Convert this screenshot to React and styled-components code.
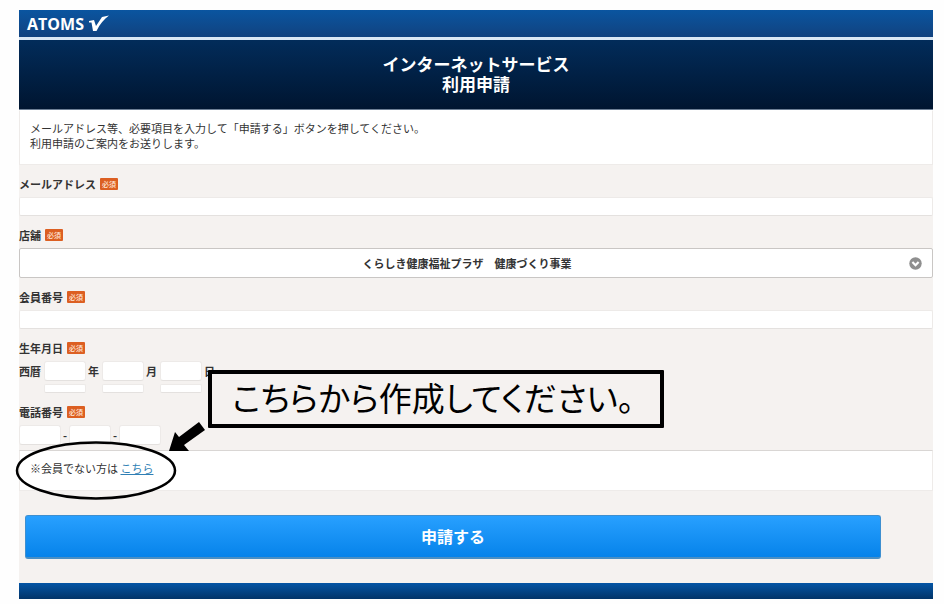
import React from 'react';
import styled, { createGlobalStyle, ThemeProvider } from 'styled-components';

const theme = {
  paper: '#f5f2f0',
  text: '#333333',
  required: '#dc5f22',
  link: '#2f7fb5',
  line: '#e4e1df',
  font: '"Noto Sans CJK JP", sans-serif'
};

const GlobalStyle = createGlobalStyle`
  * {
    box-sizing: border-box;
  }
  body {
    margin: 0;
    background: #fefefe;
  }
`;

const Page = styled.div`
  padding: 10px 11px 4px 19px;
  font-family: ${props => props.theme.font};
  font-size: 11px;
  line-height: 15px;
  color: ${props => props.theme.text};
`;

const Sheet = styled.main`
  position: relative;
  background: ${props => props.theme.paper};
`;

const BrandBar = styled.header`
  display: flex;
  align-items: center;
  gap: 5px;
  height: 30px;
  padding: 0 8px;
  background: linear-gradient(#0a55a0, #11427f);
  border-bottom: 3px solid #dbe8f5;
`;

const BrandName = styled.span`
  font-family: 'Open Sans', sans-serif;
  font-size: 16px;
  font-weight: 700;
  line-height: 20px;
  color: #ffffff;
`;

const TitleBar = styled.div`
  height: 70px;
  padding: 14px 0;
  background: linear-gradient(#022c5a, #001530);
  border-bottom: 1px solid #6d7f95;
`;

const Title = styled.h1`
  margin: 0;
  font-size: 17px;
  font-weight: 700;
  line-height: 20px;
  text-align: center;
  color: #ffffff;
`;

const Panel = styled.p`
  margin: 0;
  padding: 10px;
  background: #ffffff;
  border: 1px solid #eeebe9;
  border-top-color: ${props => (props.$ruled ? '#d9d6d4' : '#ffffff')};
`;

const Intro = styled(Panel)`
  height: 55px;
`;

const Notice = styled(Panel)`
  height: 41px;
  margin-top: 5px;
`;

const Link = styled.a`
  color: ${props => props.theme.link};
  text-decoration: underline;
`;

const Field = styled.div`
  padding-top: 9px;
`;

const Caption = styled.div`
  display: flex;
  align-items: center;
  gap: 4px;
  height: 20px;
  margin-bottom: 3px;
  font-weight: 700;
`;

const Required = styled.span`
  width: 18px;
  height: 12px;
  border-radius: 1px;
  background: ${props => props.theme.required};
  color: #ffe6d8;
  font-size: 7px;
  font-weight: 500;
  line-height: 12px;
  text-align: center;
`;

const TextInput = styled.input`
  display: block;
  width: 100%;
  height: 19px;
  padding: 0 6px;
  border: 1px solid #edeae8;
  border-bottom-color: ${props => props.theme.line};
  border-radius: 2px;
  background: #ffffff;
  font: inherit;
`;

const SmallInput = styled(TextInput)`
  width: 42px;
  height: 20px;
  border-radius: 3px;
`;

const SelectBox = styled.div`
  display: grid;
  align-items: center;
  > * {
    grid-area: 1 / 1;
  }
`;

const Select = styled.select`
  appearance: none;
  width: 100%;
  height: 30px;
  padding: 0 18px 0 0;
  border: 1px solid #c9c6c4;
  border-radius: 2px;
  background: #ffffff;
  color: ${props => props.theme.text};
  font: inherit;
  font-weight: 700;
  text-align: center;
  text-align-last: center;
`;

const SelectIcon = styled.svg`
  justify-self: end;
  margin-right: 11px;
  pointer-events: none;
`;

const Parts = styled.div`
  display: flex;
  align-items: flex-start;
  gap: ${props => props.$gap}px;
  line-height: 20px;
  font-weight: 700;
`;

const DatePart = styled.div`
  display: flex;
  gap: 2px;
`;

const DateStack = styled.div`
  height: 32px;
`;

const DateStrip = styled.div`
  height: 9px;
  margin-top: 3px;
  border: 1px solid #edeae8;
  border-bottom-color: ${props => props.theme.line};
  border-radius: 2px;
  background: #ffffff;
`;

const Actions = styled.div`
  padding: 24px 52px 24px 6px;
`;

const Submit = styled.button`
  display: block;
  width: 100%;
  height: 44px;
  padding: 0;
  border: 1px solid #3d8fd0;
  border-bottom: 2px solid #4a8fc4;
  border-radius: 3px;
  background: linear-gradient(#28a0ff, #0683ea);
  color: #ffffff;
  font: inherit;
  font-size: 16px;
  font-weight: 700;
`;

const Footer = styled.footer`
  height: 16px;
  background: linear-gradient(#0455a5, #023468);
`;

const Callout = styled.div`
  position: absolute;
  top: 360px;
  left: 189px;
  width: 456px;
  height: 58px;
  padding-left: 20px;
  border: 4px solid #000000;
  border-radius: 1px;
  background: ${props => props.theme.paper};
  color: #000000;
  font-size: 33px;
  font-feature-settings: 'palt';
  line-height: 46px;
  white-space: nowrap;
`;

const Marker = styled.svg`
  position: absolute;
  top: 410px;
  left: -5px;
  pointer-events: none;
`;

function Label({ htmlFor, id, children }) {
  return (
    <Caption>
      <label htmlFor={htmlFor} id={id}>{children}</label>
      <Required>必須</Required>
    </Caption>
  );
}

const dateParts = [
  { id: 'year', unit: '年' },
  { id: 'month', unit: '月' },
  { id: 'day', unit: '日' }
];

export default function App() {
  return (
    <ThemeProvider theme={theme}>
      <GlobalStyle />
      <Page>
        <Sheet>
          <BrandBar>
            <BrandName>ATOMS</BrandName>
            <svg width="21" height="17" viewBox="0 0 21 17" aria-hidden="true">
              <path d="M0 6 L5 5 L7 11 L13 2 L20 0.5 C15 4 11 9 7.5 16 L4 16 L2.5 7.5 L0 7.5 Z" fill="#ffffff" />
            </svg>
          </BrandBar>
          <TitleBar>
            <Title>
              インターネットサービス
              <br />
              利用申請
            </Title>
          </TitleBar>
          <Intro>
            メールアドレス等、必要項目を入力して「申請する」ボタンを押してください。
            <br />
            利用申請のご案内をお送りします。
          </Intro>
          <form onSubmit={e => e.preventDefault()}>
            <Field>
              <Label htmlFor="mail">メールアドレス</Label>
              <TextInput id="mail" type="email" />
            </Field>
            <Field>
              <Label htmlFor="shop">店舗</Label>
              <SelectBox>
                <Select id="shop">
                  <option>くらしき健康福祉プラザ　健康づくり事業</option>
                </Select>
                <SelectIcon width="13" height="13" viewBox="0 0 13 13" aria-hidden="true">
                  <circle cx="6.5" cy="6.5" r="6.2" fill="#8f8f8f" />
                  <path d="M3.4 5 L6.5 8.2 L9.6 5" fill="none" stroke="#ffffff" strokeWidth="2.2" />
                </SelectIcon>
              </SelectBox>
            </Field>
            <Field>
              <Label htmlFor="member">会員番号</Label>
              <TextInput id="member" />
            </Field>
            <Field role="group" aria-labelledby="birth">
              <Label htmlFor="year" id="birth">生年月日</Label>
              <Parts $gap={3}>
                <span>西暦</span>
                {dateParts.map(({ id, unit }) => (
                  <DatePart key={id}>
                    <DateStack>
                      <SmallInput id={id} aria-label={unit} />
                      <DateStrip />
                    </DateStack>
                    <span>{unit}</span>
                  </DatePart>
                ))}
              </Parts>
            </Field>
            <Field role="group" aria-labelledby="tel">
              <Label htmlFor="tel1" id="tel">電話番号</Label>
              <Parts $gap={2}>
                <SmallInput id="tel1" type="tel" />
                <span>-</span>
                <SmallInput type="tel" aria-labelledby="tel" />
                <span>-</span>
                <SmallInput type="tel" aria-labelledby="tel" />
              </Parts>
            </Field>
            <Notice $ruled>
              ※会員でない方は <Link href="#register">こちら</Link>
            </Notice>
            <Actions>
              <Submit type="submit">申請する</Submit>
            </Actions>
          </form>
          <Footer />
          <Callout>こちらから作成してください。</Callout>
          <Marker width="200" height="90" viewBox="14 420 200 90" aria-hidden="true">
            <ellipse cx="96" cy="470.5" rx="79" ry="28" fill="none" stroke="#000000" strokeWidth="2.5" />
            <path d="M169 451 L175 432 L179 437 L199 422 L205 430 L184 445 L189 451 Z" fill="#000000" />
          </Marker>
        </Sheet>
      </Page>
    </ThemeProvider>
  );
}
